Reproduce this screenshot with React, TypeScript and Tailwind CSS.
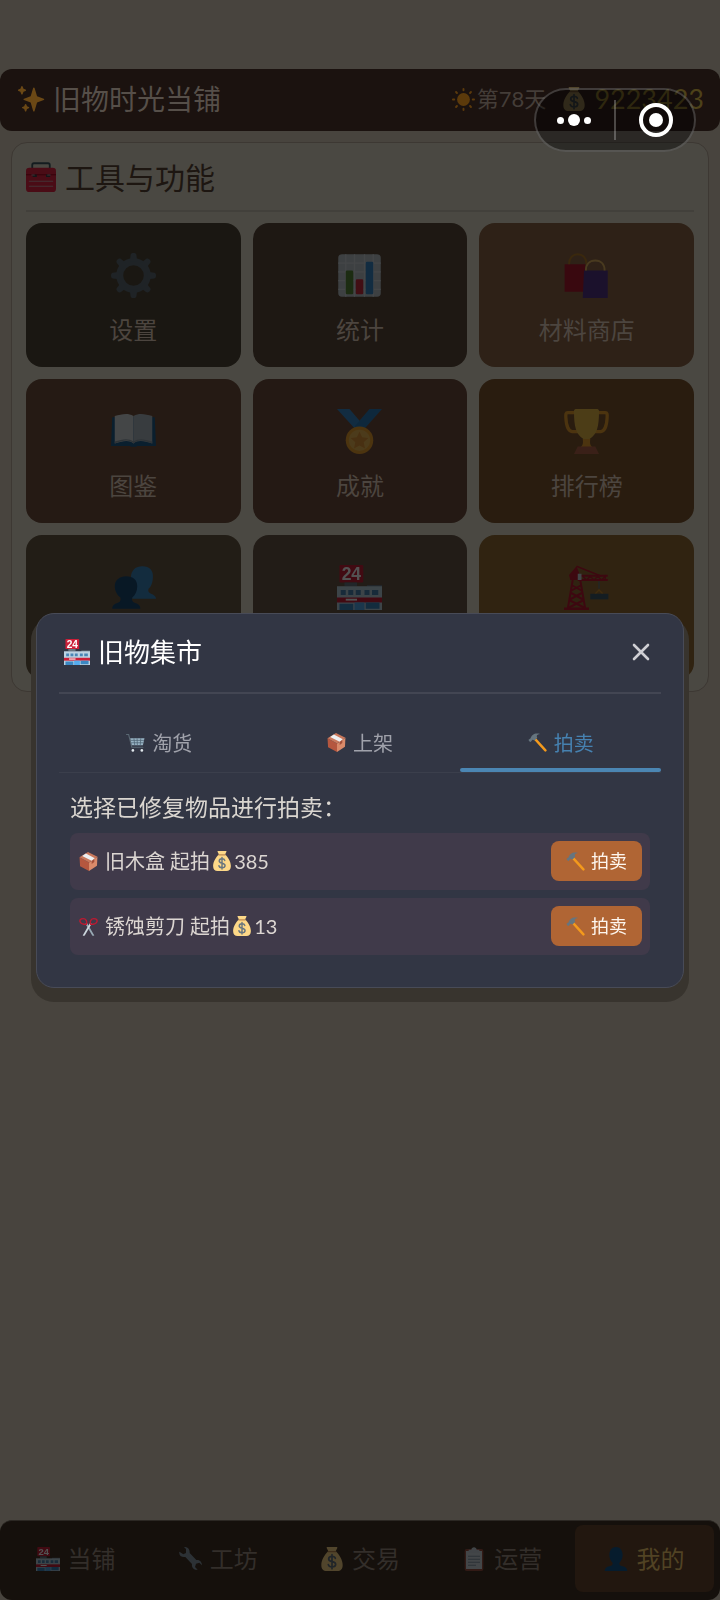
import React, { ReactNode } from 'react'
import clsx from 'clsx'

type IconProps = { className?: string }

function Svg({ className, children }: IconProps & { children: ReactNode }) {
  return (
    <svg viewBox="0 0 36 36" className={clsx("shrink-0", className)} fill="none" aria-hidden="true">
      {children}
    </svg>
  )
}

function SparklesIcon({ className }: IconProps) {
  return (
    <Svg className={className}>
      <g fill="#FFAC33">
        <path d="M34.3 16.9l-8.9-3.3-3.3-10.9c-.3-.9-1.6-.9-1.9 0l-3.3 10.9L8 16.9c-.9.3-.9 1.5 0 1.900l8.9 3.3 3.3 11.200c.3.9 1.6.9 1.9 0l3.3-11.200 8.9-3.3c.9-.4.9-1.600 0-1.900z" />
        <path d="M14.300 27.900l-2.300-.9-.9-2.400c-.3-.9-1.600-.9-1.900 0L8.300 27l-2.300.9c-.9.300-.9 1.500 0 1.900l2.300.9.900 2.600c.3.900 1.600.9 1.900 0l.9-2.600 2.300-.9c.9-.4.900-1.600 0-1.900z" />
        <path d="M10 4.700l-2.700-1.100L6.200.8c-.3-.9-1.500-.9-1.900 0L3.200 3.600.6 4.700c-.8.300-.8 1.500 0 1.900l2.600 1 1.100 3.100c.4.900 1.600.9 1.900 0l1.100-3.100 2.700-1c.9-.4.9-1.600 0-1.900z" />
      </g>
    </Svg>
  )
}

function SunIcon({ className }: IconProps) {
  return (
    <Svg className={className}>
      <circle cx="18" cy="18" r="10" fill="#FFA01E" />
      {[0, 45, 90, 135, 180, 225, 270, 315].map((a) => (
        <rect key={a} x="16.500" y="0" width="3" height="5" rx="1.500" fill="#FFA01E" transform={`rotate(${a} 18 18)`} />
      ))}
    </Svg>
  )
}

function MoneyIcon({ className }: IconProps) {
  return (
    <Svg className={className}>
      <path fill="#FDD888" d="M11 0h14c1 0 1.300 1 .8 1.800L23.500 6.500C29 11 34 20 34 27c0 6-3 9-8 9H10c-5 0-8-3-8-9 0-7 5-16 10.500-20.500L10.200 1.800C9.700 1 10 0 11 0z" />
      <path stroke="#BF8A52" strokeWidth="2" strokeLinecap="round" d="M12.500 7h11" />
      <path stroke="#67757F" strokeWidth="2.600" strokeLinecap="round" d="M23 17c-.5-2-2.500-3-5-3-3 0-5 1.500-5 4 0 5.500 10.500 2.500 10.500 8 0 2.500-2.500 4-5.500 4s-5-1.200-5.500-3.500M18 11.500v21" />
    </Svg>
  )
}

function ToolboxIcon({ className }: IconProps) {
  return (
    <Svg className={className}>
      <path stroke="#31474D" strokeWidth="2.200" d="M7.500 9V3.500c0-1.200.8-2 2-2h17c1.200 0 2 .8 2 2V9" />
      <rect y="7" width="36" height="29" rx="4" fill="#B81F36" />
      <path fill="#8F0A20" d="M0 14.500h36v1.500H0z" />
      <path fill="#31373D" d="M8 15h5v3H8zM24 15h5v3h-5z" />
      <path stroke="#A97C85" strokeWidth="1.300" strokeLinecap="round" d="M7 15.500h3M26 15.500h3M4 23h28M4 29h28" />
    </Svg>
  )
}

function GearIcon({ className }: IconProps) {
  return (
    <Svg className={className}>
      <circle cx="18" cy="18" r="11" stroke="#66757F" strokeWidth="5.500" />
      {[0, 45, 90, 135, 180, 225, 270, 315].map((a) => (
        <path key={a} d="M15 7l.7-5.500C15.900.4 16.700 0 18 0s2.100.4 2.300 1.500L21 7z" fill="#66757F" transform={`rotate(${a} 18 18)`} />
      ))}
    </Svg>
  )
}

function ChartIcon({ className }: IconProps) {
  return (
    <Svg className={className}>
      <rect x="1" y="1" width="34" height="34" rx="3" fill="#CCD6DD" />
      <path stroke="#E1E8ED" strokeWidth="1" d="M1 8h34M1 15h34M1 22h34M1 29h34M7 1v34M14 1v34M22 1v34M29 1v34" />
      <rect x="7" y="14" width="6" height="19" rx="1" fill="#5C913B" />
      <rect x="15" y="21" width="6" height="12" rx="1" fill="#DD2E44" />
      <rect x="23" y="7" width="6" height="26" rx="1" fill="#3B94D9" />
    </Svg>
  )
}

function BagsIcon({ className }: IconProps) {
  return (
    <Svg className={className}>
      <path fill="#BE1931" d="M.500 9H17v22H.500z" />
      <path stroke="#C1842B" strokeWidth="1.500" d="M4 9C4 4 7 1 11 1s7 3 7 8" />
      <path fill="#5B3894" d="M16 14h19v22H15z" />
      <path stroke="#F4C267" strokeWidth="1.500" d="M17.500 14c0-5 3-8 7.500-8s7.500 3 7.500 8" />
    </Svg>
  )
}

function BookIcon({ className }: IconProps) {
  return (
    <Svg className={className}>
      <path fill="#226699" d="M1 6.500h34l1 23H21c-1 1-5 1-6 0H0z" />
      <path fill="#E1E8ED" d="M3 5.500C8 5 12 2.500 18 5.500v22c-4-3-8-2-15 0z" />
      <path fill="#BCC8D2" d="M33 5.500C28 5 24 2.500 18 5.500v22c4-3 8-2 15 0z" />
      <path fill="#99AAB5" d="M3 27.500c6-2 11-4 15 0 4-4 9-2 15 0V26c-6-2-11-3-15 0-4-3-9-2-15 0z" />
    </Svg>
  )
}

function MedalIcon({ className }: IconProps) {
  return (
    <Svg className={className}>
      <path fill="#3B94D9" d="M0 0h10l12 14-6 3.500z" />
      <path fill="#2F86C9" d="M36 0H26L14 14l6 4z" />
      <circle cx="18" cy="25" r="11" fill="#FFAC33" />
      <circle cx="18" cy="25" r="8.500" fill="#FFC65A" />
      <path fill="#F0A03B" d="M18 18l2.100 4.600 5 .6-3.700 3.400 1 4.900-4.400-2.400-4.400 2.400 1-4.900-3.700-3.400 5-.6z" />
    </Svg>
  )
}

function TrophyIcon({ className }: IconProps) {
  return (
    <Svg className={className}>
      <path stroke="#FFAC33" strokeWidth="2.600" d="M9 2.800H3C1.500 2.800 1.300 4 1.500 7c.3 6 2 11 5 11h6M27 2.800h6c1.500 0 1.700 1.200 1.500 4.200-.3 6-2 11-5 11h-6" />
      <path fill="#FFCC4D" d="M8 1.500C8 .5 9 0 10 0h16c1 0 2 .5 2 1.500C28 14 26.500 20 20.500 24v2h-5v-2C9.500 20 8 14 8 1.500z" />
      <path fill="#FFAC33" d="M15 24h6c-.5 4 0 5 2 7H13c2-2 2.500-3 2-7z" />
      <path fill="#C1694F" d="M11 30h14l3 6H8z" />
    </Svg>
  )
}

function PeopleIcon({ className }: IconProps) {
  return (
    <Svg className={className}>
      <path fill="#3B88C3" d="M16 10c0-6 4-9 9-9 6 0 9 3.500 8.500 9-.2 3-.8 7-3.500 9-.5 2 0 3 2 4 2 .8 4 2 4 4H17z" />
      <path fill="#1A4A75" d="M3 17c0-5 4-8 9-8 6 0 9 3 9 8 0 4-1.500 7-4 9-.5 2 0 3.500 2 4.200 2.500.8 4.500 2 4.500 4.800H1c0-2.800 2-4 4.500-4.800 2-.7 2.500-2.200 2-4.200C5 24 3 21 3 17z" />
    </Svg>
  )
}

function StoreIcon({ className }: IconProps) {
  return (
    <Svg className={className}>
      <rect x="2" y="0" width="19" height="14" rx="1" fill="#CC1F38" />
      <text x="11.500" y="12" textAnchor="middle" fontSize="14" fontWeight="700" fontFamily="Liberation Sans, sans-serif" fill="#fff">24</text>
      <path fill="#66757F" d="M6 14h10v3H6zM24 16h12v3H24z" />
      <path fill="#BDD3E2" d="M0 17h36v19H0z" />
      <path fill="#4A86B5" d="M3 20h4v4H3zM9 20h4v4H9zM15 20h4v4h-4zM22 20h4v4h-4zM28 20h5v4h-5z" />
      <path fill="#CC1F38" d="M0 26h36v4H0z" />
      <path fill="#fff" d="M7 27h9v1.500H7z" />
      <path fill="#3B88C3" d="M2 31h11v5H2zM23 30h11v5H23z" />
      <path fill="#55ACEE" d="M14 30h8v6h-8z" />
    </Svg>
  )
}

function CraneIcon({ className }: IconProps) {
  return (
    <Svg className={className}>
      <path fill="#BE1931" d="M0 34h20v2H0zM4 8l6-7 2 5v6H5z" />
      <path stroke="#BE1931" strokeWidth="1.600" d="M7 12L3 35M13 12l4 23M6 16l9 5M14 16l-9 5M5 22l11 6M15 22L4 28M4 28l12 6M16 28L4 34M11 8.500h24M11 12h24" />
      <path stroke="#BE1931" strokeWidth="1.100" d="M10 1l20 8M15 9l3 3L21 9l3 3L27 9l3 3L33 9v3" />
      <path fill="#CCD6DD" d="M11 7h3v5h-3z" />
      <path stroke="#66757F" strokeWidth="1" d="M28 13v6" />
      <path stroke="#C98A2B" strokeWidth="1.100" d="M25 23l3-3 3 3" />
      <path fill="#3E5B6B" d="M21 23h14.500v4.500H21z" />
    </Svg>
  )
}

function CartIcon({ className }: IconProps) {
  return (
    <Svg className={className}>
      <path stroke="#5A6873" strokeWidth="2" strokeLinecap="round" d="M1 3h4l6 24h21" />
      <path fill="#99B4C4" d="M8 10h27l-3 13H11z" />
      <path stroke="#4C6272" strokeWidth="1.400" d="M9 14h25M10 18.500h23M15 10l1.500 13M21 10l.5 13M28 10l-1 13" />
      <circle cx="13" cy="33" r="2.500" fill="#E1E8ED" />
      <circle cx="30" cy="33" r="2.500" fill="#E1E8ED" />
    </Svg>
  )
}

function PackageIcon({ className }: IconProps) {
  return (
    <Svg className={className}>
      <path fill="#B5573F" d="M1 10l18 10v16L2 27z" />
      <path fill="#D98A6A" d="M35 9L19 20v16l15-10z" />
      <path fill="#C9785C" d="M1 10L17 0l18 9-16 11z" />
      <path fill="#EDEFF1" d="M6 7.500L13 3l17 9-6 4.500z" />
      <path fill="#A34F39" d="M24 17l5-3.500V19l-5 3.500z" />
    </Svg>
  )
}

function HammerIcon({ className }: IconProps) {
  return (
    <Svg className={className}>
      <path stroke="#F49A1C" strokeWidth="4.500" strokeLinecap="round" d="M14 12l19 21" />
      <path fill="#66757F" d="M1 13l4-3c1-5 6-9 12-9 2 0 4 .3 6 1-4 .5-6 2-6.500 4l1 3-5 5-4-1-3.500 4c-1.500 0-4-2-4-4z" />
    </Svg>
  )
}

function ScissorsIcon({ className }: IconProps) {
  return (
    <Svg className={className}>
      <path fill="#99AAB5" d="M12 13l3-2 14 24c-3 1-4 0-5-2z" />
      <path fill="#CCD6DD" d="M24 13l-3-2L7 35c3 1 4 0 5-2z" />
      <path stroke="#BE1931" strokeWidth="2.600" d="M14 14c2-6-1-11-6-11S1 6 2 9s6 5 12 5zM22 14c-2-6 1-11 6-11s7 3 6 6-6 5-12 5z" />
    </Svg>
  )
}

function WrenchIcon({ className }: IconProps) {
  return (
    <Svg className={className}>
      <path fill="#8899A6" d="M2 7l6 4 4-2V3L9 0c5-.5 9 3 8.500 9l10 10.500c5-1 8.500 3 8.500 8l-4-4-5 1.500-1.500 5 4 4c-5 1-9.500-3-8.500-8.500L11 15C5 16 1 12 2 7z" />
    </Svg>
  )
}

function ClipboardIcon({ className }: IconProps) {
  return (
    <Svg className={className}>
      <rect x="4" y="3" width="28" height="33" rx="3" fill="#9B5142" />
      <path fill="#D2DAE0" d="M6 6h24v27H6z" />
      <path fill="#CCD6DD" d="M10 4h4c0-5 8-5 8 0h4v5H10z" />
      <path stroke="#8899A6" strokeWidth="1.600" d="M9 14h18M9 18.500h18M9 23h18M9 27.500h12" />
    </Svg>
  )
}

function PersonIcon({ className }: IconProps) {
  return (
    <Svg className={className}>
      <path fill="#14568C" d="M8 12C8 5 12 0 18 0s10 5 10 12c0 5-2 9-5 12 0 3 1 4 5 5 4 .9 7 3 7 7H1c0-4 3-6.100 7-7 4-1 5-2 5-5-3-3-5-7-5-12z" />
    </Svg>
  )
}

const tools = [
  { label: "设置", Icon: GearIcon, bg: "bg-[#1a1712]" },
  { label: "统计", Icon: ChartIcon, bg: "bg-[#1e1813]" },
  { label: "材料商店", Icon: BagsIcon, bg: "bg-[#2e2117]" },
  { label: "图鉴", Icon: BookIcon, bg: "bg-[#251a14]" },
  { label: "成就", Icon: MedalIcon, bg: "bg-[#241914]" },
  { label: "排行榜", Icon: TrophyIcon, bg: "bg-[#291c0f]" },
];

// last row, icon only
const extraTools = [
  { name: "好友", Icon: PeopleIcon, bg: "bg-[#221d16]" },
  { name: "集市", Icon: StoreIcon, bg: "bg-[#221c17]" },
  { name: "扩建", Icon: CraneIcon, bg: "bg-[#302311]" },
];

const tabs = [
  { label: "淘货", Icon: CartIcon, active: false },
  { label: "上架", Icon: PackageIcon, active: false },
  { label: "拍卖", Icon: HammerIcon, active: true },
];

const auctionItems = [
  { name: "旧木盒", price: 385, Icon: PackageIcon },
  { name: "锈蚀剪刀", price: 13, Icon: ScissorsIcon },
];

const navItems = [
  { label: "当铺", Icon: StoreIcon, active: false },
  { label: "工坊", Icon: WrenchIcon, active: false },
  { label: "交易", Icon: MoneyIcon, active: false },
  { label: "运营", Icon: ClipboardIcon, active: false },
  { label: "我的", Icon: PersonIcon, active: true },
];

function TopBar() {
  return (
    <header className="flex h-[62px] items-center justify-between rounded-xl bg-[#1b120f] pb-0.5 pl-[18px] pr-4">
      <h1 className="flex items-center gap-2 text-[28px] leading-10 text-[#564f49]">
        <SparklesIcon className="size-[27px] brightness-[.42]" />
        旧物时光当铺
      </h1>
      <div className="flex items-center">
        <SunIcon className="mr-0.5 size-[23px] brightness-[.36]" />
        <span className="text-[22px] leading-8 text-[#443d38]">第78天</span>
        <MoneyIcon className="ml-4 mr-2 size-6 brightness-[.32]" />
        <span className="text-[27px] leading-8 text-[#4d4119]">9223423</span>
      </div>
    </header>
  )
}

// mini program menu in the top right corner
function Capsule() {
  return (
    <div className="absolute right-6 top-[88px] z-20 flex h-16 w-[162px] items-center rounded-full border-2 border-white/20 bg-black/40">
      <button type="button" aria-label="更多" className="flex h-full flex-1 items-center justify-center gap-1 pr-0.5">
        <span className="size-[7px] rounded-full bg-white" />
        <span className="size-3 rounded-full bg-white" />
        <span className="size-[7px] rounded-full bg-white" />
      </button>
      <span className="h-10 w-0.5 bg-white/25" />
      <button type="button" aria-label="关闭小程序" className="flex h-full flex-1 items-center justify-center pl-0.5">
        <span className="flex size-[34px] items-center justify-center rounded-full border-4 border-white">
          <span className="size-[14px] rounded-full bg-white" />
        </span>
      </button>
    </div>
  )
}

function ToolsPanel() {
  return (
    <section className="mx-[11px] mt-[11px] rounded-2xl border border-[#3d3833] bg-[#4a4842] px-3.5 pb-3">
      <h2 className="flex h-[69px] items-center gap-[9px] border-b-2 border-[#42403b] text-[30px] leading-10 text-[#1d1611]">
        <ToolboxIcon className="size-[30px] brightness-[.4]" />
        工具与功能
      </h2>
      <div className="mt-[11px] grid grid-cols-3 gap-3">
        {tools.map(({ label, Icon, bg }) => (
          <button
            key={label}
            type="button"
            className={clsx("flex h-36 flex-col items-center gap-3.5 rounded-2xl pt-[30px] text-2xl leading-9 text-[#4c453f]", bg)}
          >
            <Icon className="size-[45px] brightness-[.3]" />
            {label}
          </button>
        ))}
        {extraTools.map(({ name, Icon, bg }) => (
          <button
            key={name}
            type="button"
            aria-label={name}
            className={clsx("flex h-36 flex-col items-center rounded-2xl pt-[30px]", bg)}
          >
            <Icon className="size-[45px] brightness-[.32]" />
          </button>
        ))}
      </div>
    </section>
  )
}

function BottomNav() {
  return (
    <nav className="mt-auto flex h-20 gap-[3px] rounded-xl border-t border-[#2b2723] bg-[#15100c] px-1.5 pb-2 pt-1">
      {navItems.map(({ label, Icon, active }) => (
        <a
          key={label}
          href="#"
          className={clsx(
            "flex flex-1 items-center justify-center gap-2 rounded-lg text-2xl leading-9",
            active ? "bg-[#22170f] text-[#514324]" : "text-[#332e2a]"
          )}
        >
          <Icon className="size-6 brightness-[.32]" />
          {label}
        </a>
      ))}
    </nav>
  )
}

function MarketDialog() {
  return (
    <div className="fixed inset-0 z-10 flex items-center px-9">
      <div
        role="dialog"
        aria-modal="true"
        aria-labelledby="market-title"
        className="w-full rounded-[18px] border border-[#484b57] bg-[#323644] px-[22px] pb-8 shadow-[0_9px_0_5px_#38342e]"
      >
        <div className="flex h-20 items-center justify-between border-b-2 border-[#434653] px-[5px] pb-0.5">
          <h2 id="market-title" className="flex items-center gap-2 text-[26px] leading-9 text-white">
            <StoreIcon className="size-[26px]" />
            旧物集市
          </h2>
          <button type="button" aria-label="关闭" className="flex size-[30px] items-center justify-center text-[#cfcfd4]">
            <svg viewBox="0 0 18 18" className="size-[18px]" stroke="currentColor" strokeWidth="2.600" strokeLinecap="round">
              <path d="M2 2l14 14M16 2L2 16" />
            </svg>
          </button>
        </div>

        <div role="tablist" className="mt-6 grid grid-cols-3 border-b border-[#3b3f4c]">
          {tabs.map(({ label, Icon, active }) => (
            <button
              key={label}
              type="button"
              role="tab"
              aria-selected={active}
              className="flex flex-col"
            >
              <span
                className={clsx(
                  "flex h-[50px] w-full items-center justify-center gap-[7px] text-xl",
                  active ? "text-[#4681b0]" : "text-[#a0a2ab]"
                )}
              >
                <Icon className="size-[19px]" />
                {label}
              </span>
              <span className={clsx("h-1 w-full rounded-full", active && "bg-[#4b86b3]")} />
            </button>
          ))}
        </div>

        <div className="px-[11px] pt-[18px]">
          <p className="text-[23px] leading-8 text-[#dad6d0]">选择已修复物品进行拍卖：</p>
          <ul className="mt-2.5 flex flex-col gap-2">
            {auctionItems.map(({ name, price, Icon }) => (
              <li key={name} className="flex h-[57px] items-center justify-between rounded-lg bg-[#403a4a] pl-[9px] pr-2">
                <span className="flex items-center text-xl leading-8 text-[#dcd6d2]">
                  <Icon className="mr-[7px] size-[19px]" />
                  <span>{name} 起拍</span>
                  <MoneyIcon className="mx-0.5 size-5" />
                  <span>{price}</span>
                </span>
                <button
                  type="button"
                  className="flex h-10 items-center gap-1.5 rounded-lg bg-[#b06534] px-[15px] text-lg leading-6 text-[#fdf6ee]"
                >
                  <HammerIcon className="size-[19px]" />
                  拍卖
                </button>
              </li>
            ))}
          </ul>
        </div>
      </div>
    </div>
  )
}

export default function App() {
  return (
    <div
      lang="zh-CN"
      className="relative flex min-h-screen flex-col bg-[#48443e] pt-[69px] font-['Lato','Noto_Sans_CJK_SC',sans-serif] font-normal"
    >
      <TopBar />
      <ToolsPanel />
      <BottomNav />
      <MarketDialog />
      <Capsule />
    </div>
  )
}
